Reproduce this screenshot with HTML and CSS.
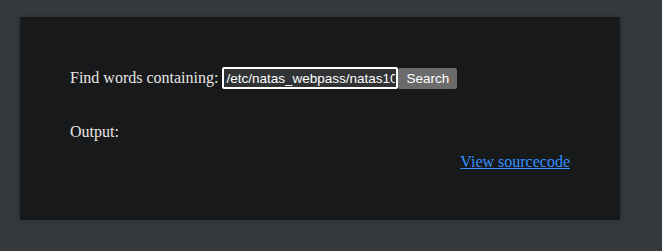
FILE: index.html
```html
<!DOCTYPE html>
<html lang="en">
<head>
    <meta charset="UTF-8">
    <title>natas9</title>
    <link rel="stylesheet" href="styles.css">
</head>
<body>
    <div class="content">
        <form class="search-form">
            <label for="needle">Find words containing:</label>
            <input class="needle" id="needle" name="needle" value="/etc/natas_webpass/natas10">
            <input class="submit" type="submit" value="Search">
        </form>
        <div class="output">Output:</div>
        <pre class="result"></pre>
        <div class="viewsource"><a href="#">View sourcecode</a></div>
    </div>
</body>
</html>
```

FILE: styles.css
```css
body {
    margin: 0;
    padding: 17px 0 0 20px;
    background-color: #35393c;
    font-family: 'Liberation Serif', 'Times New Roman', serif;
    font-size: 16px;
    color: #e8e6e3;
    height: 251px;
    box-sizing: border-box;
}
.content {
    width: 600px;
    height: 203px;
    box-sizing: border-box;
    padding: 50px 50px 0 50px;
    background-color: #18191b;
    box-shadow: 0 0 6px rgba(0, 0, 0, 0.25);
}
.search-form {
    display: flex;
    align-items: center;
    margin: 0;
    height: 22px;
}
.search-form label {
    margin-right: 4px;
}
.needle {
    width: 176px;
    height: 22px;
    box-sizing: border-box;
    margin: 0;
    padding: 0 1px 0 2px;
    border: 2px solid #ffffff;
    border-radius: 2px;
    background-color: #303234;
    color: #ffffff;
    font-family: 'Liberation Sans', Arial, sans-serif;
    font-size: 13.5px;
    outline: none;
}
.submit {
    height: 21px;
    margin: 0;
    padding: 0 8px;
    border: none;
    border-radius: 2px;
    background-color: #6b6b6b;
    color: #ffffff;
    font-family: 'Liberation Sans', Arial, sans-serif;
    font-size: 13.5px;
}
.output {
    margin-top: 34px;
}
.result {
    margin: 0;
}
.viewsource {
    text-align: right;
    margin-top: 12px;
}
.viewsource a {
    color: #3391ff;
}
```
